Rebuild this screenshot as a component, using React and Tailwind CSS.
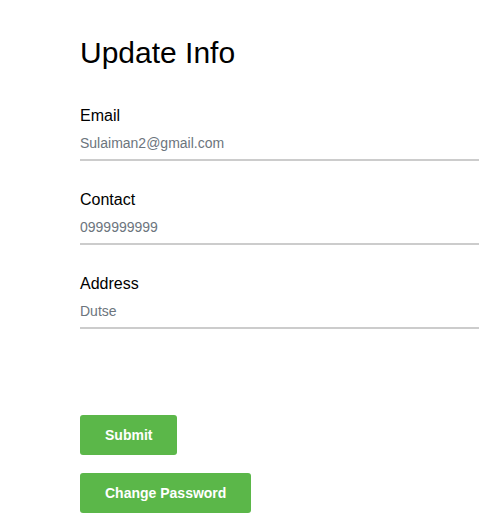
import React from 'react';

export default function App() {
    const fields = [
        { label: 'Email', value: 'Sulaiman2@gmail.com' },
        { label: 'Contact', value: '0999999999' },
        { label: 'Address', value: 'Dutse' }
    ];

    return (
        <div className="min-h-screen bg-white pl-20 font-['Liberation_Sans',Arial,sans-serif]">
            <h1 className="pt-[35px] text-[30px] leading-[36px] text-black">Update Info</h1>

            <form className="mt-[33px] flex flex-col gap-[27px]">
                {fields.map((field) => (
                    <div key={field.label}>
                        <label className="block text-base leading-6 text-black">{field.label}</label>
                        <input
                            type="text"
                            defaultValue={field.value}
                            className="mt-[5px] block w-full border-b-2 border-[#cccccc] pb-[6px] text-sm leading-5 text-[#6c757d] outline-none"
                        />
                    </div>
                ))}
            </form>

            <div className="mt-[86px] flex flex-col items-start gap-[18px]">
                <button className="h-10 rounded-[3px] bg-[#5bb749] px-[25px] text-sm font-bold text-white">
                    Submit
                </button>
                <button className="h-10 rounded-[3px] bg-[#5bb749] px-[25px] text-sm font-bold text-white">
                    Change Password
                </button>
            </div>
        </div>
    );
}
